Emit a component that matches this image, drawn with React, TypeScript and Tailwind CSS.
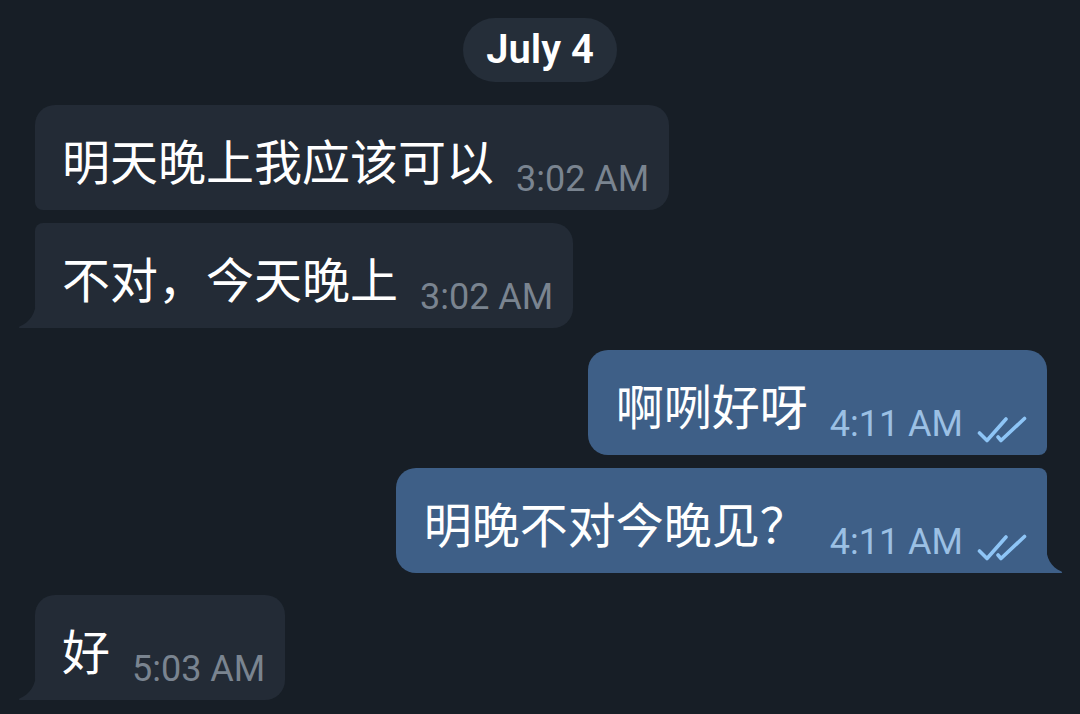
const cjk = "font-['Noto_Sans_CJK_SC','Roboto',sans-serif]";

function Tail({ side, color }: { side: 'left' | 'right'; color: string }) {
  if (side === 'left') {
    return (
      <svg className="absolute bottom-0 left-[-17px]" width="18" height="28" viewBox="0 0 18 28">
        <path d="M18 0 C18 13 12 22 2 26.2 Q0 27.4 1.6 28 L18 28 Z" fill={color} />
      </svg>
    );
  }
  return (
    <svg className="absolute bottom-0 right-[-16px]" width="17" height="28" viewBox="0 0 17 28">
      <path d="M0 0 C0 13 5 22 15 26.2 Q17 27.4 15.4 28 L0 28 Z" fill={color} />
    </svg>
  );
}

function Checks() {
  return (
    <svg width="50" height="27" viewBox="0 0 50 27" className="mb-[12px] ml-[14px] shrink-0" fill="none" stroke="#8ec5f6" strokeWidth="3.6" strokeLinecap="round" strokeLinejoin="round">
      <path d="M2.5 17 L10 24.5 L29 3" />
      <path d="M21 21 L24 24.5 L47.5 2.5" />
    </svg>
  );
}

type Msg = {
  text: string;
  time: string;
  shape: string;
  out?: boolean;
  tail?: boolean;
};

function Bubble({ text, time, shape, out, tail }: Msg) {
  return (
    <div className={`flex ${out ? 'justify-end pr-[33px]' : 'justify-start pl-[35px]'}`}>
      <div className={`relative flex h-[105px] items-start ${out ? 'bg-[#3e5f87] pl-[28px]' : 'bg-[#232b36] pl-[27px]'} pr-[20px] ${shape}`}>
        <span className={`${cjk} mt-[30px] text-[48px] leading-[48px] text-white whitespace-nowrap`}>{text}</span>
        <div className="flex items-end self-end ml-[22px]">
          <span className={`font-['Roboto',sans-serif] mb-[13px] text-[36px] leading-[36px] whitespace-nowrap ${out ? 'text-[#9bc0e4]' : 'text-[#7a8490]'}`}>{time}</span>
          {out && <Checks />}
        </div>
        {tail && <Tail side={out ? 'right' : 'left'} color={out ? '#3e5f87' : '#232b36'} />}
      </div>
    </div>
  );
}

export default function App() {
  return (
    <div className="w-[1080px] h-[714px] overflow-hidden bg-[#171e26] pt-[18px] flex flex-col">
      <div className="mx-auto flex h-[64px] w-[154px] items-center justify-center rounded-full bg-[#252e39]">
        <span className="font-['Roboto',sans-serif] text-[40px] font-semibold leading-none text-white">July 4</span>
      </div>

      <div className="mt-[23px] flex flex-col gap-[13px]">
        <Bubble text="明天晚上我应该可以" time="3:02 AM" shape="rounded-tl-[20px] rounded-tr-[20px] rounded-br-[20px] rounded-bl-[8px]" />
        <Bubble text="不对，今天晚上" time="3:02 AM" tail shape="rounded-tl-[8px] rounded-tr-[20px] rounded-br-[20px] rounded-bl-none" />
      </div>

      <div className="mt-[22px] flex flex-col gap-[13px]">
        <Bubble out text="啊咧好呀" time="4:11 AM" shape="rounded-tl-[20px] rounded-tr-[20px] rounded-br-[8px] rounded-bl-[20px]" />
        <Bubble out text="明晚不对今晚见？" time="4:11 AM" tail shape="rounded-tl-[20px] rounded-tr-[8px] rounded-br-none rounded-bl-[20px]" />
      </div>

      <div className="mt-[22px] flex flex-col">
        <Bubble text="好" time="5:03 AM" tail shape="rounded-tl-[20px] rounded-tr-[20px] rounded-br-[20px] rounded-bl-none" />
      </div>
    </div>
  );
}
